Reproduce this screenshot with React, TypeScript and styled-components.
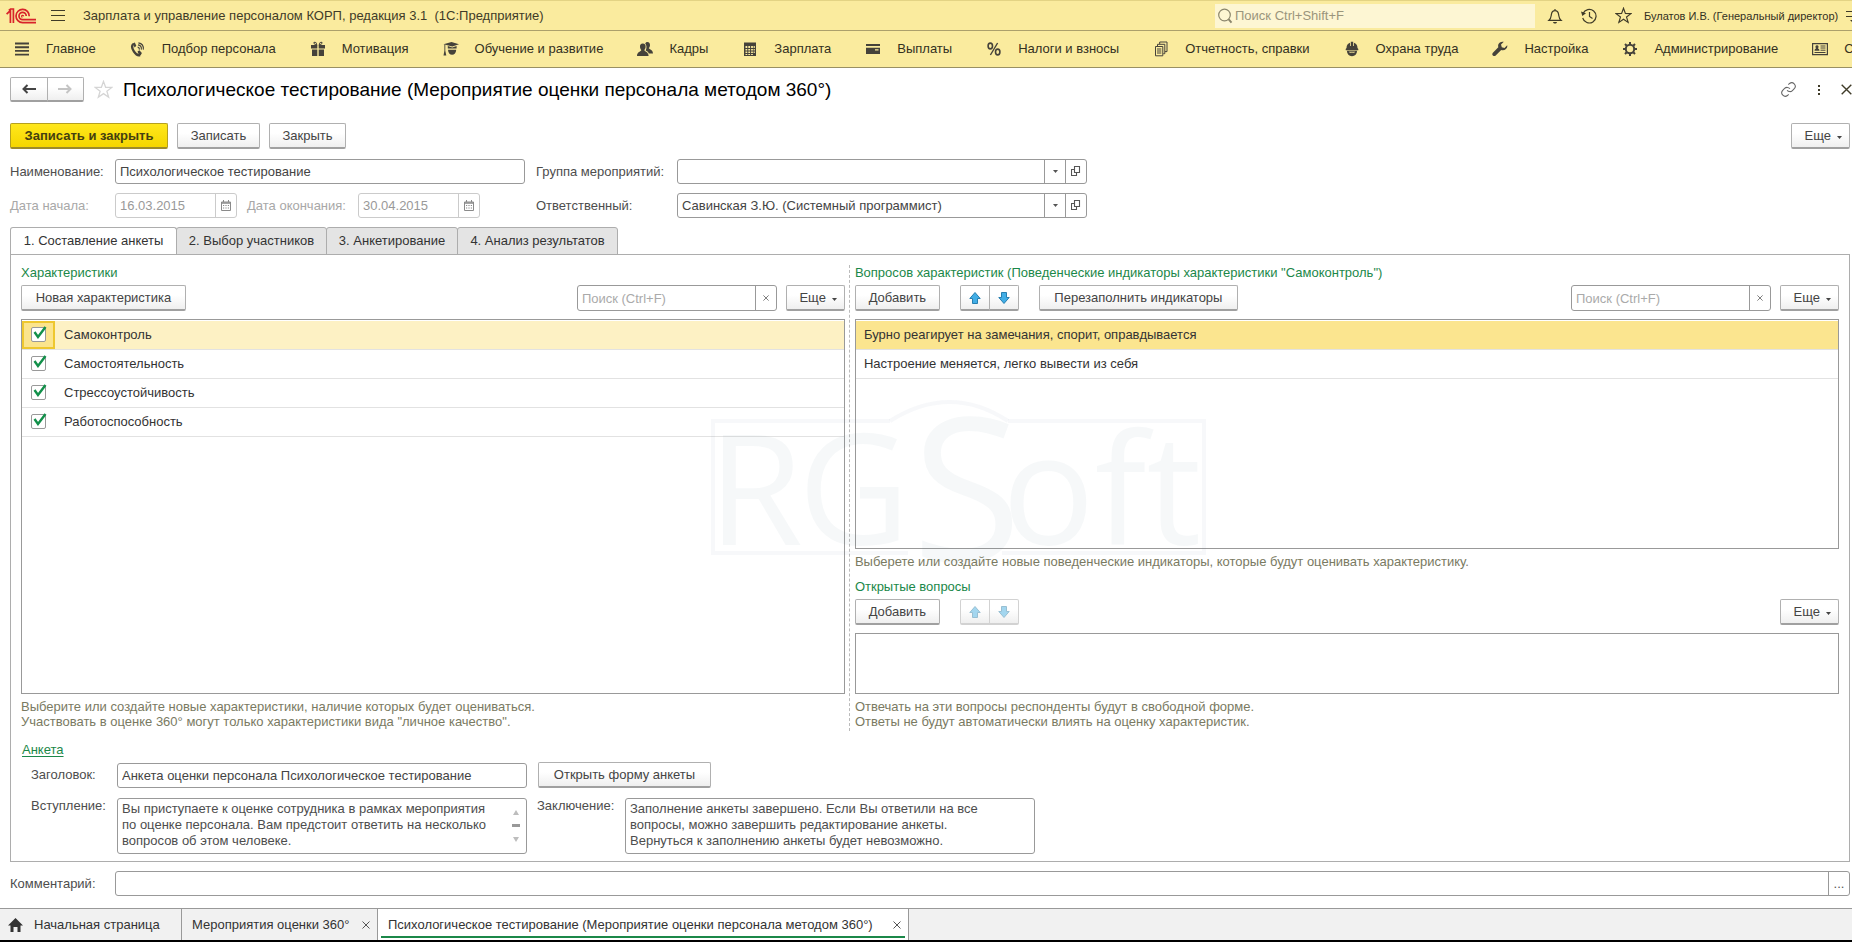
import React from 'react';
import styled, { createGlobalStyle, css } from 'styled-components';

const GlobalStyle = createGlobalStyle`
  *, *::before, *::after { box-sizing: border-box; }
  body { margin: 0; overflow-x: hidden; background: #fff; }
  body, button, input, textarea { font-family: "Liberation Sans", Arial, sans-serif; font-size: 13px; color: #444; }
  button { cursor: pointer; }
`;

const Page = styled.div`
  display: flex;
  flex-direction: column;
  min-height: 100vh;
  width: 100%;
  overflow: hidden;
`;

/* ---------- application header ---------- */

const TopBar = styled.header`
  display: flex;
  align-items: center;
  height: 31px;
  padding-left: 6px;
  background: #faeb9e;
  border-top: 1px solid #e3d384;
  border-bottom: 1px solid #aca06b;
`;

const IconButton = styled.button<{ $w?: number }>`
  display: flex;
  flex: none;
  align-items: center;
  justify-content: center;
  width: ${(p) => p.$w ?? 34}px;
  height: 24px;
  padding: 0;
  border: 0;
  background: none;
  color: #3f3b28;
`;

const AppTitle = styled.div`
  flex: 1;
  min-width: 0;
  padding-left: 3px;
  overflow: hidden;
  white-space: pre;
  color: #3f3b28;
`;

const GlobalSearch = styled.label`
  display: flex;
  flex: none;
  align-items: center;
  gap: 2px;
  width: 320px;
  height: 24px;
  margin-right: 3px;
  padding: 0 2px;
  background: #fdf6d3;
  color: #8b866c;
`;

const SearchInput = styled.input`
  flex: 1;
  min-width: 0;
  padding: 0;
  border: 0;
  outline: 0;
  background: none;
  &::placeholder { color: #9a957c; opacity: 1; }
`;

const UserLink = styled.a`
  flex: none;
  width: 206px;
  padding-left: 4px;
  font-size: 11px;
  white-space: nowrap;
  text-decoration: none;
  color: #33301f;
`;

const TopTail = styled.div`
  flex: none;
  width: 6px;
  height: 24px;
  overflow: hidden;
  color: #3f3b28;
`;

const SectionBar = styled.nav`
  display: flex;
  align-items: center;
  gap: 34px;
  height: 37px;
  padding: 0 0 1px 14px;
  overflow: hidden;
  background: #faeb9e;
  border-bottom: 1px solid #999063;
`;

const SectionLink = styled.a`
  display: flex;
  flex: none;
  align-items: center;
  gap: 16px;
  white-space: nowrap;
  text-decoration: none;
  color: #33301f;
  svg { color: #45423a; }
`;

/* ---------- form ---------- */

const Form = styled.main`
  display: flex;
  flex: 1;
  flex-direction: column;
  padding: 9px 2px 12px 10px;
`;

const TitleRow = styled.div`
  display: flex;
  align-items: center;
  height: 25px;
  margin: 0 -7px 21px 0;
`;

const Heading = styled.h1`
  flex: 1;
  margin: 0;
  font-size: 19px;
  font-weight: 400;
  line-height: 22px;
  white-space: nowrap;
  color: #000;
`;

const Row = styled.div<{ $gap?: number; $mb?: number }>`
  display: flex;
  align-items: center;
  gap: ${(p) => p.$gap ?? 9}px;
  margin-bottom: ${(p) => p.$mb ?? 0}px;
`;

const Spacer = styled.div`
  flex: 1;
`;

const buttonLook = css`
  height: 26px;
  border: 1px solid #b0b0b0;
  border-bottom: 2px solid #a0a0a0;
  border-radius: 2px;
  background: linear-gradient(#fff 40%, #efefef);
  color: #444;
`;

const Button = styled.button<{ $primary?: boolean; $w?: number }>`
  ${buttonLook}
  flex: none;
  width: ${(p) => (p.$w ? `${p.$w}px` : 'auto')};
  padding: 0;
  white-space: nowrap;
  ${(p) =>
    p.$primary &&
    css`
      font-weight: 700;
      color: #453f10;
      background: linear-gradient(#ffe71c, #f5d600);
      border-color: #b5a01e;
      border-bottom-color: #9d8b2b;
    `}
`;

const MenuButton = styled.button`
  ${buttonLook}
  display: flex;
  flex: none;
  align-items: center;
  justify-content: flex-end;
  gap: 6px;
  width: 59px;
  padding: 0 7px 0 12px;
  svg { margin-top: 3px; }
`;

const PairGroup = styled.div<{ $faded?: boolean; $w: number; $h: number }>`
  display: flex;
  flex: none;
  width: ${(p) => p.$w}px;
  height: ${(p) => p.$h}px;
  button {
    ${buttonLook}
    display: flex;
    flex: 1;
    align-items: center;
    justify-content: center;
    height: 100%;
    padding: 0;
    ${(p) => p.$faded && 'border-color: #d2d2d2;'}
  }
  button:first-child { border-radius: 2px 0 0 2px; }
  button:last-child { margin-left: -1px; border-radius: 0 2px 2px 0; }
`;

const Fields = styled.div`
  display: grid;
  grid-template-columns: 105px minmax(0, 410px) 152px minmax(0, 410px);
  grid-auto-rows: 25px;
  row-gap: 9px;
  align-items: center;
  margin: 10px 0 9px;
`;

const Label = styled.label<{ $faded?: boolean; $w?: number; $indent?: number }>`
  flex: none;
  width: ${(p) => (p.$w ? `${p.$w}px` : 'auto')};
  padding-left: ${(p) => p.$indent ?? 0}px;
  line-height: 16px;
  white-space: nowrap;
  color: ${(p) => (p.$faded ? '#a8a8a8' : '#4d4d4d')};
`;

const Box = styled.div<{ $faded?: boolean; $w?: number; $h?: number }>`
  display: flex;
  flex: ${(p) => (p.$w ? 'none' : '1')};
  width: ${(p) => (p.$w ? `${p.$w}px` : 'auto')};
  height: ${(p) => p.$h ?? 25}px;
  overflow: hidden;
  border: 1px solid ${(p) => (p.$faded ? '#cbcbcb' : '#999')};
  border-radius: 3px;
  background: #fff;
  input {
    flex: 1;
    min-width: 0;
    padding: 0 4px;
    border: 0;
    outline: 0;
    background: none;
    color: ${(p) => (p.$faded ? '#999' : '#444')};
  }
  input::placeholder { color: #aaa; opacity: 1; }
  button {
    display: flex;
    flex: none;
    align-items: center;
    justify-content: center;
    width: 21px;
    padding: 0;
    border: 0;
    border-left: 1px solid ${(p) => (p.$faded ? '#cbcbcb' : '#999')};
    background: none;
    color: ${(p) => (p.$faded ? '#8a8a8a' : '#555')};
  }
`;

const Labelled = styled.div`
  padding-left: 11px;
`;

const Tabs = styled.div`
  display: flex;
  height: 28px;
  margin-bottom: -1px;
`;

const Tab = styled.button<{ $active?: boolean; $w: number }>`
  width: ${(p) => p.$w}px;
  height: 28px;
  margin-right: -1px;
  padding: 0 0 2px;
  border: 1px solid #adadad;
  border-radius: 3px 3px 0 0;
  background: ${(p) => (p.$active ? '#fff' : '#e4e4e4')};
  border-bottom-color: ${(p) => (p.$active ? '#fff' : '#adadad')};
  color: #333;
  white-space: nowrap;
`;

const Panel = styled.section`
  display: flex;
  flex: 1;
  flex-direction: column;
  margin-bottom: 9px;
  padding: 10px 10px 7px;
  border: 1px solid #adadad;
`;

const Columns = styled.div`
  position: relative;
  display: grid;
  flex: 1;
  grid-template-columns: minmax(0, 36fr) 2px minmax(0, 43fr);
  column-gap: 4px;
`;

const Column = styled.div`
  display: flex;
  flex-direction: column;
  min-width: 0;
  padding-bottom: 2px;
`;

const Divider = styled.div`
  border-left: 1px dashed #bbb;
`;

const GroupTitle = styled.h2`
  margin: 0 0 4px;
  font-size: 13px;
  font-weight: 400;
  line-height: 16px;
  color: #1b8849;
`;

const ListBox = styled.div<{ $h?: number }>`
  flex: ${(p) => (p.$h ? 'none' : '1')};
  height: ${(p) => (p.$h ? `${p.$h}px` : 'auto')};
  margin: 8px 0 5px;
  padding-top: 1px;
  border: 1px solid #999;
`;

const List = styled.table`
  width: 100%;
  border-collapse: separate;
  border-spacing: 0;
  color: #333;
  td {
    height: 29px;
    padding: 0 8px 2px;
    border-bottom: 1px solid #e2e2e2;
  }
`;

const ListRow = styled.tr<{ $bg?: string }>`
  background: ${(p) => p.$bg ?? 'transparent'};
`;

const CheckCell = styled.td<{ $focused?: boolean }>`
  && {
    width: 33px;
    padding: 0 0 2px;
    text-align: center;
    ${(p) =>
      p.$focused &&
      css`
        background: #fbe48d;
        box-shadow: inset 0 0 0 2px #eec72f;
      `}
  }
`;

const NameCell = styled.td`
  && { padding-left: 9px; }
`;

const Check = styled.input`
  appearance: none;
  display: block;
  width: 15px;
  height: 15px;
  margin: 0 auto;
  border: 1px solid #999;
  border-radius: 2px;
  background: #fff;
`;

const CheckWrap = styled.span`
  position: relative;
  display: inline-block;
  vertical-align: middle;
  svg {
    position: absolute;
    left: 2px;
    top: -1px;
    pointer-events: none;
  }
`;

const Hint = styled.p<{ $mb?: number }>`
  margin: 0 0 ${(p) => p.$mb ?? 0}px;
  line-height: 15px;
  white-space: pre-line;
  color: #7a7a62;
`;

const Watermark = styled.svg`
  position: absolute;
  left: calc(50% - 240px);
  top: 128px;
  width: 520px;
  height: 180px;
  pointer-events: none;
`;

const SurveyLink = styled.a`
  align-self: flex-start;
  margin: 11px 0 4px 1px;
  line-height: 16px;
  text-underline-offset: 2px;
  color: #1b8849;
`;

const TextRow = styled.div`
  display: flex;
  align-items: flex-start;
`;

const TextBox = styled.div`
  display: flex;
  flex: none;
  width: 410px;
  height: 56px;
  border: 1px solid #999;
  border-radius: 3px;
  textarea {
    flex: 1;
    padding: 2px 4px;
    border: 0;
    outline: 0;
    resize: none;
    overflow: hidden;
    background: none;
    line-height: 16px;
    color: #4d4d4d;
  }
`;

const ScrollMarks = styled.div`
  display: flex;
  flex: none;
  align-items: center;
  justify-content: center;
  width: 20px;
`;

/* ---------- window tabs ---------- */

const WindowBar = styled.footer`
  display: flex;
  height: 34px;
  border-top: 1px solid #999;
  border-bottom: 2px solid #000;
  background: #f1f1f1;
`;

const WindowTab = styled.div<{ $active?: boolean; $w: number }>`
  display: flex;
  flex: none;
  align-items: center;
  justify-content: space-between;
  width: ${(p) => p.$w}px;
  padding: 0 7px 0 10px;
  border-right: 1px solid #999;
  background: ${(p) => (p.$active ? '#fff' : 'transparent')};
  background-image: ${(p) => (p.$active ? 'linear-gradient(#1b8849, #1b8849)' : 'none')};
  background-repeat: no-repeat;
  background-size: calc(100% - 6px) 2px;
  background-position: 3px 27px;
  white-space: nowrap;
  a { display: flex; align-items: center; gap: 11px; color: #333; text-decoration: none; }
  button { display: flex; padding: 0; border: 0; background: none; color: #555; }
`;

const HomeTab = styled(WindowTab)`
  padding: 0 18px 0 8px;
`;

/* ---------- icons ---------- */

const Svg = ({ w = 16, h = w, children }: { w?: number; h?: number; children: React.ReactNode }) => (
  <svg width={w} height={h} viewBox={`0 0 ${w} ${h}`} fill="none" stroke="currentColor" aria-hidden="true">
    {children}
  </svg>
);

const Logo = () => (
  <Svg w={30} h={16}>
    <g stroke="#d8232a" strokeWidth="1.7">
      <path d="M.6 6.2 4.4 2.6V15M2.8 2.4 4.6 1H7.4V15" />
      <path d="M23.2 8.2A6.6 6.6 0 1 0 16.6 14.6H30" />
      <path d="M20.2 8A3.6 3.6 0 1 0 16.6 11.6H30" />
      <path d="M17.6 8.4a1 1 0 1 0-1.2.9" strokeWidth="1.2" />
    </g>
  </Svg>
);

const Caret = () => (
  <Svg w={5} h={3}>
    <path d="M0 0H5L2.500 3Z" fill="currentColor" stroke="none" />
  </Svg>
);

const Cross = ({ size = 8 }: { size?: number }) => (
  <svg width={size} height={size} viewBox="0 0 8 8" stroke="currentColor" strokeWidth="1" aria-hidden="true">
    <path d="M.5.5 7.500 7.500M7.500.5.5 7.500" />
  </svg>
);

const OpenIcon = () => (
  <Svg w={10} h={11}>
    <path d="M3.500.5h5v6h-5zM3.500 3.500h-3v6h5v-3" strokeWidth="1.1" />
  </Svg>
);

const CalendarIcon = () => (
  <Svg w={10} h={11}>
    <path d="M.5 2h9v8.500h-9zM2.500 0v2M7.500 0v2" />
    <path d="M.5 3h9" strokeWidth="1.500" />
    <path d="M2 5.500h6M2 8h6" strokeDasharray="1.200 1.200" strokeWidth="1.200" />
  </Svg>
);

const MoveIcon = ({ down, faded }: { down?: boolean; faded?: boolean }) => (
  <svg width="12" height="14" viewBox="0 0 12 14" aria-hidden="true">
    <path
      d={down ? 'M3.500 1.500h5v5h2.700L6 12.500.8 6.500h2.700Z' : 'M3.500 12.500h5v-5h2.700L6 1.500.8 7.500h2.700Z'}
      fill={faded ? '#a3d6ef' : '#42aee6'}
      stroke={faded ? '#98bfd2' : '#277fb0'}
    />
  </svg>
);

const Star = ({ size, color }: { size: number; color?: string }) => (
  <svg width={size} height={size} viewBox="0 0 18 18" fill="none" stroke={color ?? 'currentColor'} strokeWidth="1.200" strokeLinejoin="miter" aria-hidden="true">
    <path d="M9 1.300 11 6.900l5.900.1-4.700 3.600 1.700 5.700L9 12.900l-4.900 3.400 1.700-5.700L1.100 7 7 6.900Z" />
  </svg>
);

const sectionIcons: Record<string, React.ReactNode> = {
  main: (
    <path d="M1 2.500h14M1 6.200h14M1 9.900h14M1 13.600h14" strokeWidth="1.900" />
  ),
  phone: (
    <>
      <path d="M3.200 3C1.300 5 2.400 8.200 4 10.600s4 4.200 6 3.500" strokeWidth="2.400" />
      <path d="M2.600 2.400l2.200-.9 1.500 3.200-1.600 1.700zM7.500 10.500l1.900-1.200 2.500 2.700-1.200 2.300-1.400.4z" fill="currentColor" stroke="none" />
      <path d="M7.600 6c1.300.3 1.900 1.200 1.700 2.600M8 3.900c2.400.4 3.700 2.200 3.300 4.700M8.400 1.900c3.400.5 5.300 3.200 4.900 6.700" strokeWidth="1.100" />
    </>
  ),
  gift: (
    <g fill="currentColor" stroke="none">
      <path d="M1 4h6.300v3.500H1zM8.700 4H15v3.500H8.700zM2 8.500h5.300V15H2zM8.700 8.500H14V15H8.700z" />
      <path
        d="M7.400 4.200C3 4 2.700.8 4.600.7c1.600 0 2.500 1.600 2.800 3.500zM8.600 4.200C13 4 13.300.8 11.400.7 9.800.7 8.900 2.300 8.600 4.200zM6.200 3.200C5.800 2 5.200 1.600 4.700 1.700c-.6.2-.2 1.300 1.500 1.500zM9.800 3.200c.4-1.200 1-1.600 1.500-1.500.6.200.2 1.300-1.500 1.500z"
        fillRule="evenodd"
      />
    </g>
  ),
  cap: (
    <g fill="currentColor" stroke="none">
      <path d="M.5 3.300 8.500 1 16 3.300l-6.700 2.200z" />
      <path d="M4.800 5 9.300 6.500 13.600 5v2.600H4.800zM5 8.700h8.200c0 3-1.900 5-4.100 5S5 11.700 5 8.700zM1.400 3.500h.9v6.300l1 4.700H.5l.9-4.700z" />
    </g>
  ),
  people: (
    <g fill="currentColor" stroke="none">
      <path d="M10.300 1c2 0 2.800 1.500 2.700 3.200-.1 1.400-.7 2.300-1.200 2.900.1 1.300 4 1.300 4.200 5.400h-4.300c-.4-1.700-1.800-2.300-3-2.900C9.900 7.400 9.800 4.300 8.200 2.600 8.600 1.600 9.300 1 10.300 1z" />
      <path d="M5.800 2.600c2.100 0 3 1.600 2.800 3.400-.1 1.400-.7 2.400-1.300 3 .1 1.500 4.200 1.600 4.300 6H0c0-4.400 4.200-4.500 4.300-6C3.700 8.400 3.100 7.400 3 6c-.2-1.800.7-3.400 2.800-3.400z" />
    </g>
  ),
  calc: (
    <path
      d="M2 1.500h12V15H2zM3.500 5v2h1.800V5zM6.300 5v2h1.800V5zM9.100 5v2h1.800V5zM11.600 5v2h1.200V5zM3.500 8v1.500h1.800V8zM6.300 8v1.500h1.800V8zM9.100 8v1.500h1.800V8zM11.600 8v1.500h1.200V8zM3.500 10.500V12h1.800v-1.500zM6.300 10.500V12h1.800v-1.500zM9.100 10.500V12h1.800v-1.500zM11.600 10.500V12h1.200v-1.500zM3.500 13v1h1.800v-1zM6.300 13v1h1.800v-1zM9.100 13v1h1.800v-1z"
      fill="currentColor"
      fillRule="evenodd"
      stroke="none"
    />
  ),
  card: (
    <path d="M1 3h14v2H1zM1 6.800h14V13H1zM10 8.300v1.200h3.500V8.300z" fill="currentColor" fillRule="evenodd" stroke="none" />
  ),
  percent: (
    <>
      <ellipse cx="4.300" cy="5" rx="2.200" ry="2.900" strokeWidth="1.600" />
      <ellipse cx="11.700" cy="11" rx="2.200" ry="2.900" strokeWidth="1.600" />
      <path d="M11.600 2 4.400 14" strokeWidth="1.400" />
    </>
  ),
  docs: (
    <>
      <path d="M2.500 5.500h7.300v9.300H2.500zM4.500 5V3.300h7.300v9.400h-1.500M6.700 3V1h7.300v9.600h-2" />
      <path d="M4 8h4.300M4 10h4.300M4 12h4.300" />
    </>
  ),
  helmet: (
    <g fill="currentColor" stroke="none">
      <path d="M2.500 7C2.500 4 4 2.300 6 1.700V5h.8V.8h2.400V5h.8V1.700C12 2.300 13.500 4 13.500 7l.8 1v1.200H1.700V8z" />
      <path d="M3 9.800h10c0 3.200-2 5.400-5 5.400s-5-2.200-5-5.400zm1.800 1c.5 1.200 1.700 1.300 3.200.7 1.500.6 2.700.5 3.200-.7z" fillRule="evenodd" />
    </g>
  ),
  wrench: (
    <path
      d="M15.200 4.300 12.500 7l-2.700-.7L9 3.600 11.800.8C9.500.2 7 1.300 6.300 3.600c-.3 1-.2 1.800 0 2.700L.9 11.800a2 2 0 0 0 0 2.700c.8.8 2 .8 2.800 0l5.500-5.500c3.500 1 6.800-1.500 6-4.700z"
      fill="currentColor"
      stroke="none"
    />
  ),
  gear: (
    <>
      <circle cx="8" cy="8" r="4.200" strokeWidth="2" />
      <path d="M8 1v2.300M8 12.700V15M1 8h2.300M12.700 8H15M3 3l1.700 1.700M11.300 11.300 13 13M13 3l-1.700 1.700M4.700 11.300 3 13" strokeWidth="2" />
    </>
  ),
  news: (
    <>
      <path d="M.6 2.600h14.800v11H.6z" strokeWidth="1.200" />
      <path d="M8.500 5h5M8.500 7h5M2.500 11.500h11M8.500 9.200h5" />
      <path d="M2.500 9.700h5c0-2-1.200-1.600-1.500-2.500 1-1 .8-3-1-3s-2 2-1 3c-.3.900-1.500.5-1.500 2.500z" fill="currentColor" stroke="none" />
    </>
  ),
};

const sections: [string, string][] = [
  ['main', 'Главное'],
  ['phone', 'Подбор персонала'],
  ['gift', 'Мотивация'],
  ['cap', 'Обучение и развитие'],
  ['people', 'Кадры'],
  ['calc', 'Зарплата'],
  ['card', 'Выплаты'],
  ['percent', 'Налоги и взносы'],
  ['docs', 'Отчетность, справки'],
  ['helmet', 'Охрана труда'],
  ['wrench', 'Настройка'],
  ['gear', 'Администрирование'],
  ['news', 'С'],
];

/* ---------- composite controls ---------- */

const More = () => (
  <MenuButton type="button">
    Еще <Caret />
  </MenuButton>
);

const MoveButtons = ({ faded }: { faded?: boolean }) => (
  <PairGroup $w={59} $h={26} $faded={faded}>
    <button type="button" aria-label="Переместить вверх" disabled={faded}><MoveIcon faded={faded} /></button>
    <button type="button" aria-label="Переместить вниз" disabled={faded}><MoveIcon down faded={faded} /></button>
  </PairGroup>
);

const ListSearch = () => (
  <Box $w={200} $h={26}>
    <input type="text" placeholder="Поиск (Ctrl+F)" aria-label="Поиск" />
    <button type="button" aria-label="Очистить"><Cross size={6} /></button>
  </Box>
);

const DateField = ({ id, value }: { id: string; value: string }) => (
  <Box $faded $w={122}>
    <input id={id} type="text" defaultValue={value} disabled />
    <button type="button" aria-label="Календарь" disabled><CalendarIcon /></button>
  </Box>
);

const RefField = ({ id, value }: { id: string; value?: string }) => (
  <Box>
    <input id={id} type="text" defaultValue={value} />
    <button type="button" aria-label="Выбрать"><Caret /></button>
    <button type="button" aria-label="Открыть"><OpenIcon /></button>
  </Box>
);

const traits = ['Самоконтроль', 'Самостоятельность', 'Стрессоустойчивость', 'Работоспособность'];
const indicators = [
  'Бурно реагирует на замечания, спорит, оправдывается',
  'Настроение меняется, легко вывести из себя',
];

export default function App() {
  return (
    <Page>
      <GlobalStyle />
      <TopBar>
        <Logo />
        <IconButton type="button" aria-label="Меню" $w={44}>
          <Svg w={14} h={12}><path d="M0 .5h14M0 5.500h14M0 10.500h14" /></Svg>
        </IconButton>
        <AppTitle>{'Зарплата и управление персоналом КОРП, редакция 3.1  (1С:Предприятие)'}</AppTitle>
        <GlobalSearch>
          <Svg w={16}>
            <circle cx="7.500" cy="7" r="5.800" strokeWidth="1.200" />
            <path d="m11.500 11.200 3 3.500" strokeWidth="2" />
          </Svg>
          <SearchInput type="text" placeholder="Поиск Ctrl+Shift+F" aria-label="Глобальный поиск" />
        </GlobalSearch>
        <IconButton type="button" aria-label="Уведомления">
          <Svg w={16}>
            <path d="M2 12.300h12c-2.200-1.800-2-3.600-2.400-6C11.200 4 10 2.700 8 2.700S4.800 4 4.400 6.300c-.4 2.400-.2 4.200-2.400 6zM8 1v1.700" strokeWidth="1.200" />
            <path d="M6 14h4c-.3 1.200-1 1.600-2 1.600S6.300 15.200 6 14z" fill="currentColor" stroke="none" />
          </Svg>
        </IconButton>
        <IconButton type="button" aria-label="История">
          <Svg w={16}>
            <path d="M2 5.500A6.800 6.800 0 1 1 1.700 10M8.500 4v4.500l3 2" strokeWidth="1.200" />
            <path d="M0 3.500 5 5.200 1.300 8z" fill="currentColor" stroke="none" />
          </Svg>
        </IconButton>
        <IconButton type="button" aria-label="Избранное"><Star size={17} /></IconButton>
        <UserLink href="#user">Булатов И.В. (Генеральный директор)</UserLink>
        <TopTail>
          <Svg w={14} h={24}><path d="M0 7.500h14M0 12.500h14" strokeWidth="1.200" /><path d="M4 16h8l-4 4z" fill="currentColor" stroke="none" /></Svg>
        </TopTail>
      </TopBar>

      <SectionBar>
        {sections.map(([icon, name]) => (
          <SectionLink key={icon} href={`#${icon}`}>
            <Svg w={16}>{sectionIcons[icon]}</Svg>
            {name}
          </SectionLink>
        ))}
      </SectionBar>

      <Form>
        <TitleRow>
          <PairGroup $w={74} $h={25}>
            <button type="button" aria-label="Назад">
              <Svg w={14} h={10}><path d="M2 5h12" strokeWidth="2" /><path d="M5.500 1 1.500 5l4 4" strokeWidth="2" /></Svg>
            </button>
            <button type="button" aria-label="Вперед">
              <svg width="14" height="10" viewBox="0 0 14 10" fill="none" stroke="#c4c4c4" strokeWidth="2"><path d="M0 5h12M8.500 1l4 4-4 4" /></svg>
            </button>
          </PairGroup>
          <IconButton type="button" aria-label="Добавить в избранное" $w={39}><Star size={19} color="#d5d5d5" /></IconButton>
          <Heading>Психологическое тестирование (Мероприятие оценки персонала методом 360°)</Heading>
          <IconButton type="button" aria-label="Ссылка" $w={28}>
            <svg width="17" height="17" viewBox="0 0 24 24" fill="none" stroke="#666" strokeWidth="1.500" aria-hidden="true">
              <path d="M10 13a5 5 0 0 0 7.500.5l3-3a5 5 0 0 0-7-7l-1.700 1.700" />
              <path d="M14 11a5 5 0 0 0-7.500-.5l-3 3a5 5 0 0 0 7 7l1.700-1.700" />
            </svg>
          </IconButton>
          <IconButton type="button" aria-label="Действия">
            <Svg w={4} h={14}><path d="M2 2v2M2 6v2M2 10v2" strokeWidth="2" /></Svg>
          </IconButton>
          <IconButton type="button" aria-label="Закрыть форму" $w={21}><Cross size={11} /></IconButton>
        </TitleRow>

        <Row>
          <Button type="button" $primary $w={158}>Записать и закрыть</Button>
          <Button type="button" $w={83}>Записать</Button>
          <Button type="button" $w={77}>Закрыть</Button>
          <Spacer />
          <More />
        </Row>

        <Fields>
          <Label htmlFor="name">Наименование:</Label>
          <Box><input id="name" type="text" defaultValue="Психологическое тестирование" /></Box>
          <Labelled><Label htmlFor="group">Группа мероприятий:</Label></Labelled>
          <RefField id="group" />
          <Label htmlFor="start" $faded>Дата начала:</Label>
          <Row $gap={0}>
            <DateField id="start" value="16.03.2015" />
            <Label htmlFor="end" $faded $w={121} $indent={10}>Дата окончания:</Label>
            <DateField id="end" value="30.04.2015" />
          </Row>
          <Labelled><Label htmlFor="owner">Ответственный:</Label></Labelled>
          <RefField id="owner" value="Савинская З.Ю. (Системный программист)" />
        </Fields>

        <Tabs role="tablist">
          <Tab type="button" role="tab" aria-selected="true" $active $w={167}>1. Составление анкеты</Tab>
          <Tab type="button" role="tab" $w={151}>2. Выбор участников</Tab>
          <Tab type="button" role="tab" $w={132}>3. Анкетирование</Tab>
          <Tab type="button" role="tab" $w={161}>4. Анализ результатов</Tab>
        </Tabs>

        <Panel>
          <Columns>
            <Column>
              <GroupTitle>Характеристики</GroupTitle>
              <Row>
                <Button type="button" $w={165}>Новая характеристика</Button>
                <Spacer />
                <ListSearch />
                <More />
              </Row>
              <ListBox>
                <List>
                  <tbody>
                    {traits.map((name, i) => (
                      <ListRow key={name} $bg={i === 0 ? '#fdf1c4' : undefined}>
                        <CheckCell $focused={i === 0}>
                          <CheckWrap>
                            <Check type="checkbox" defaultChecked aria-label={name} />
                            <svg width="14" height="13" viewBox="0 0 14 13" fill="none" stroke="#12904a" strokeWidth="2.400" aria-hidden="true">
                              <path d="m1.500 6 3.500 5L12.500 1" />
                            </svg>
                          </CheckWrap>
                        </CheckCell>
                        <NameCell>{name}</NameCell>
                      </ListRow>
                    ))}
                  </tbody>
                </List>
              </ListBox>
              <Hint>{'Выберите или создайте новые характеристики, наличие которых будет оцениваться.\nУчаствовать в оценке 360° могут только характеристики вида "личное качество".'}</Hint>
            </Column>
            <Divider />
            <Column>
              <GroupTitle>Вопросов характеристик (Поведенческие индикаторы характеристики "Самоконтроль")</GroupTitle>
              <Row>
                <Row $gap={20}>
                  <Button type="button" $w={85}>Добавить</Button>
                  <MoveButtons />
                  <Button type="button" $w={199}>Перезаполнить индикаторы</Button>
                </Row>
                <Spacer />
                <ListSearch />
                <More />
              </Row>
              <ListBox>
                <List>
                  <tbody>
                    {indicators.map((name, i) => (
                      <ListRow key={name} $bg={i === 0 ? '#fbe58f' : undefined}>
                        <td>{name}</td>
                      </ListRow>
                    ))}
                  </tbody>
                </List>
              </ListBox>
              <Hint $mb={10}>Выберете или создайте новые поведенческие индикаторы, которые будут оценивать характеристику.</Hint>
              <GroupTitle>Открытые вопросы</GroupTitle>
              <Row $gap={20}>
                <Button type="button" $w={85}>Добавить</Button>
                <MoveButtons faded />
                <Spacer />
                <More />
              </Row>
              <ListBox $h={61} />
              <Hint>{'Отвечать на эти вопросы респонденты будут в свободной форме.\nОтветы не будут автоматически влиять на оценку характеристик.'}</Hint>
            </Column>
            <Watermark viewBox="0 0 520 180" aria-hidden="true">
              <g fill="none" stroke="#5b7896" strokeOpacity=".05" strokeWidth="4">
                <path d="M200 28H23V160H218M312 160H514V28H318" />
                <path d="M200 28Q260-10 318 28" />
              </g>
              <g fill="#5b7896" fillOpacity=".055" fontFamily="'Open Sans', sans-serif" fontSize="154" fontWeight="500">
                <text x="18" y="152">R</text>
                <text x="108" y="152">G</text>
                <text x="222" y="168" fontSize="200">S</text>
                <text x="312" y="152">oft</text>
              </g>
            </Watermark>
          </Columns>

          <SurveyLink href="#survey">Анкета</SurveyLink>
          <Row $gap={0} $mb={10}>
            <Label htmlFor="caption" $w={96} $indent={10}>Заголовок:</Label>
            <Row $gap={11}>
              <Box $w={410}><input id="caption" type="text" defaultValue="Анкета оценки персонала Психологическое тестирование" /></Box>
              <Button type="button" $w={173}>Открыть форму анкеты</Button>
            </Row>
          </Row>
          <TextRow>
            <Label htmlFor="intro" $w={96} $indent={10}>Вступление:</Label>
            <TextBox>
              <textarea id="intro" defaultValue="Вы приступаете к оценке сотрудника в рамках мероприятия по оценке персонала. Вам предстоит ответить на несколько вопросов об этом человеке." />
              <ScrollMarks>
                <svg width="8" height="32" viewBox="0 0 8 32" aria-hidden="true">
                  <path d="M1 5 4 0l3 5zM1 27h6l-3 5z" fill="#bdbdbd" />
                  <path d="M0 14h8v3H0z" fill="#999" />
                </svg>
              </ScrollMarks>
            </TextBox>
            <Label htmlFor="outro" $w={98} $indent={10}>Заключение:</Label>
            <TextBox>
              <textarea id="outro" defaultValue={'Заполнение анкеты завершено. Если Вы ответили на все\nвопросы, можно завершить редактирование анкеты.\nВернуться к заполнению анкеты будет невозможно.'} />
            </TextBox>
          </TextRow>
        </Panel>

        <Row $gap={0}>
          <Label htmlFor="comment" $w={105}>Комментарий:</Label>
          <Box>
            <input id="comment" type="text" />
            <button type="button" aria-label="Открыть комментарий">...</button>
          </Box>
        </Row>
      </Form>

      <WindowBar>
        <HomeTab $w={182}>
          <a href="#home">
            <Svg w={15} h={14}><path d="M7.500 0 15 7.500h-2.500V14h-3V9h-4v5h-3V7.500H0z" fill="currentColor" stroke="none" /></Svg>
            Начальная страница
          </a>
        </HomeTab>
        <WindowTab $w={196}>
          <a href="#events">Мероприятия оценки 360°</a>
          <button type="button" aria-label="Закрыть вкладку"><Cross /></button>
        </WindowTab>
        <WindowTab $active $w={531}>
          <a href="#testing">Психологическое тестирование (Мероприятие оценки персонала методом 360°)</a>
          <button type="button" aria-label="Закрыть вкладку"><Cross /></button>
        </WindowTab>
      </WindowBar>
    </Page>
  );
}
